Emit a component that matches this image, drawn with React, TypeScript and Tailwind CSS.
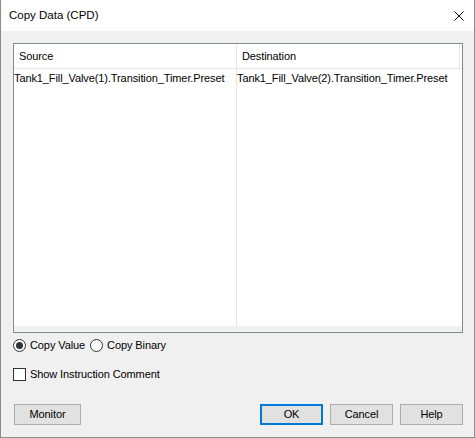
export default function App() {
  return (
    <div className="w-[475px] h-[438px] bg-[#f0f0f0] border-x border-b border-[#8c8c8c] flex flex-col text-[11px] tracking-[-0.1px] leading-none text-black font-['Liberation_Sans',sans-serif] overflow-hidden">
      <div className="h-[31px] bg-white flex items-center justify-between pl-[8px] pr-[10px] shrink-0">
        <span className="text-[11.5px] tracking-normal">Copy Data (CPD)</span>
        <svg width="10" height="10" viewBox="0 0 10 10">
          <path d="M0.5 0.5 L9.5 9.5 M9.5 0.5 L0.5 9.5" stroke="#000" strokeWidth="1" fill="none" />
        </svg>
      </div>
      <div className="flex flex-col pl-[12px] pr-[11px] pt-[12px]">
        <div className="h-[290px] border border-[#828790] bg-white flex flex-col">
          <div className="flex-1 flex flex-col min-h-0">
            <div className="h-[25px] flex border-b border-[#e5e5e5] shrink-0">
              <div className="w-[223px] border-r border-[#e5e5e5] flex items-center pl-[5px]">Source</div>
              <div className="w-[223px] border-r border-[#e5e5e5] flex items-center pl-[5px]">Destination</div>
            </div>
            <div className="flex-1 flex">
              <div className="w-[223px] border-r border-[#e5e5e5] pt-[4px] whitespace-nowrap">Tank1_Fill_Valve(1).Transition_Timer.Preset</div>
              <div className="w-[223px] pt-[4px] whitespace-nowrap">Tank1_Fill_Valve(2).Transition_Timer.Preset</div>
            </div>
          </div>
          <div className="h-[6px] bg-[#f0f0f0] shrink-0" />
        </div>
        <div className="flex items-center mt-[6px] h-[13px]">
          <div className="w-[13px] h-[13px] rounded-full border border-[#333] bg-white flex items-center justify-center">
            <div className="w-[7px] h-[7px] rounded-full bg-[#333]" />
          </div>
          <span className="ml-[4px]">Copy Value</span>
          <div className="ml-[5px] w-[13px] h-[13px] rounded-full border border-[#333] bg-white" />
          <span className="ml-[4px]">Copy Binary</span>
        </div>
        <div className="flex items-center mt-[16px] h-[13px]">
          <div className="w-[13px] h-[13px] border border-[#333] bg-white" />
          <span className="ml-[4px]">Show Instruction Comment</span>
        </div>
        <div className="flex mt-[23px]">
          <div className="ml-[1px] w-[67px] h-[21px] bg-[#e1e1e1] border border-[#adadad] flex items-center justify-center">Monitor</div>
          <div className="flex-1" />
          <div className="w-[63px] h-[21px] bg-[#e1e1e1] border-2 border-[#0078d7] flex items-center justify-center">OK</div>
          <div className="ml-[7px] w-[63px] h-[21px] bg-[#e1e1e1] border border-[#adadad] flex items-center justify-center">Cancel</div>
          <div className="ml-[7px] w-[63px] h-[21px] bg-[#e1e1e1] border border-[#adadad] flex items-center justify-center">Help</div>
        </div>
      </div>
    </div>
  );
}
